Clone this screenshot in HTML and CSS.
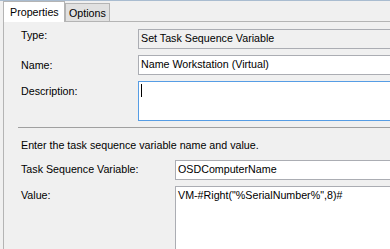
FILE: index.html
```html
<!DOCTYPE html>
<html>
<head>
<meta charset="utf-8">
<link rel="stylesheet" href="styles.css">
</head>
<body>
<div class="window">
  <div class="tabs">
    <div class="tab active">Properties</div>
    <div class="tab">Options</div>
  </div>
  <div class="page">
    <div class="form top">
      <div class="lbl l-type">Type:</div>
      <div class="box ro">Set Task Sequence Variable</div>
      <div class="lbl l-name">Name:</div>
      <div class="box">Name Workstation (Virtual)</div>
      <div class="lbl l-desc">Description:</div>
      <div class="box focus multi"><span class="caret"></span></div>
    </div>
    <div class="sep"></div>
    <p class="intro">Enter the task sequence variable name and value.</p>
    <div class="form bottom">
      <div class="lbl l-var">Task Sequence Variable:</div>
      <div class="box">OSDComputerName</div>
      <div class="lbl l-val">Value:</div>
      <div class="box value">VM-#Right("%SerialNumber%",8)#</div>
    </div>
  </div>
</div>
</body>
</html>
```
FILE: styles.css
```css
html, body {
  margin: 0;
  padding: 0;
  background: #f0f0f0;
  overflow: hidden;
}
body {
  font-family: "Liberation Sans", Arial, sans-serif;
  font-size: 10.7px;
  line-height: 13px;
  color: #000;
}
.window {
  width: 390px;
  height: 249px;
  overflow: hidden;
  background: #f0f0f0;
}
.tabs {
  display: flex;
  align-items: flex-end;
  height: 20px;
  border-top: 1px solid #a9bcd0;
  padding-left: 3px;
}
.tab {
  box-sizing: border-box;
  border: 1px solid #b4b4b4;
  border-bottom: none;
}
.tab.active {
  position: relative;
  z-index: 1;
  width: 62px;
  height: 21px;
  margin-bottom: -1px;
  background: #fff;
  padding: 4px 0 0 6px;
}
.tab:not(.active) {
  width: 45px;
  height: 18px;
  background: #e1e1e1;
  padding: 3px 0 0 3px;
}
.page {
  margin-left: 3px;
  border-top: 1px solid #b4b4b4;
  border-left: 1px solid #b4b4b4;
  height: 228px;
  padding-top: 7px;
  box-sizing: border-box;
  overflow: hidden;
}
.form {
  display: grid;
  row-gap: 6px;
  padding-left: 17px;
  margin-right: -12px;
}
.form.top {
  grid-template-columns: 117px 1fr;
}
.form.bottom {
  grid-template-columns: 154px 1fr;
}
.lbl {
  white-space: nowrap;
}
.l-type { padding-top: 0; }
.l-name { padding-top: 4px; }
.l-desc { padding-top: 4px; }
.l-var, .l-val { padding-top: 3px; }
.box {
  box-sizing: border-box;
  height: 20px;
  border: 1px solid #abadb3;
  background: #fff;
  padding: 2px 2px;
  white-space: nowrap;
  overflow: hidden;
}
.box.ro {
  background: #f0f0f0;
}
.box.focus {
  border-color: #569de5;
}
.box.multi {
  height: 40px;
}
.box.value {
  height: 70px;
}
.caret {
  display: block;
  width: 1px;
  height: 13px;
  background: #000;
}
.sep {
  margin: 6px 0 0 14px;
  border-top: 1px solid #a0a0a0;
}
.intro {
  margin: 11px 0 8px 17px;
}
```
